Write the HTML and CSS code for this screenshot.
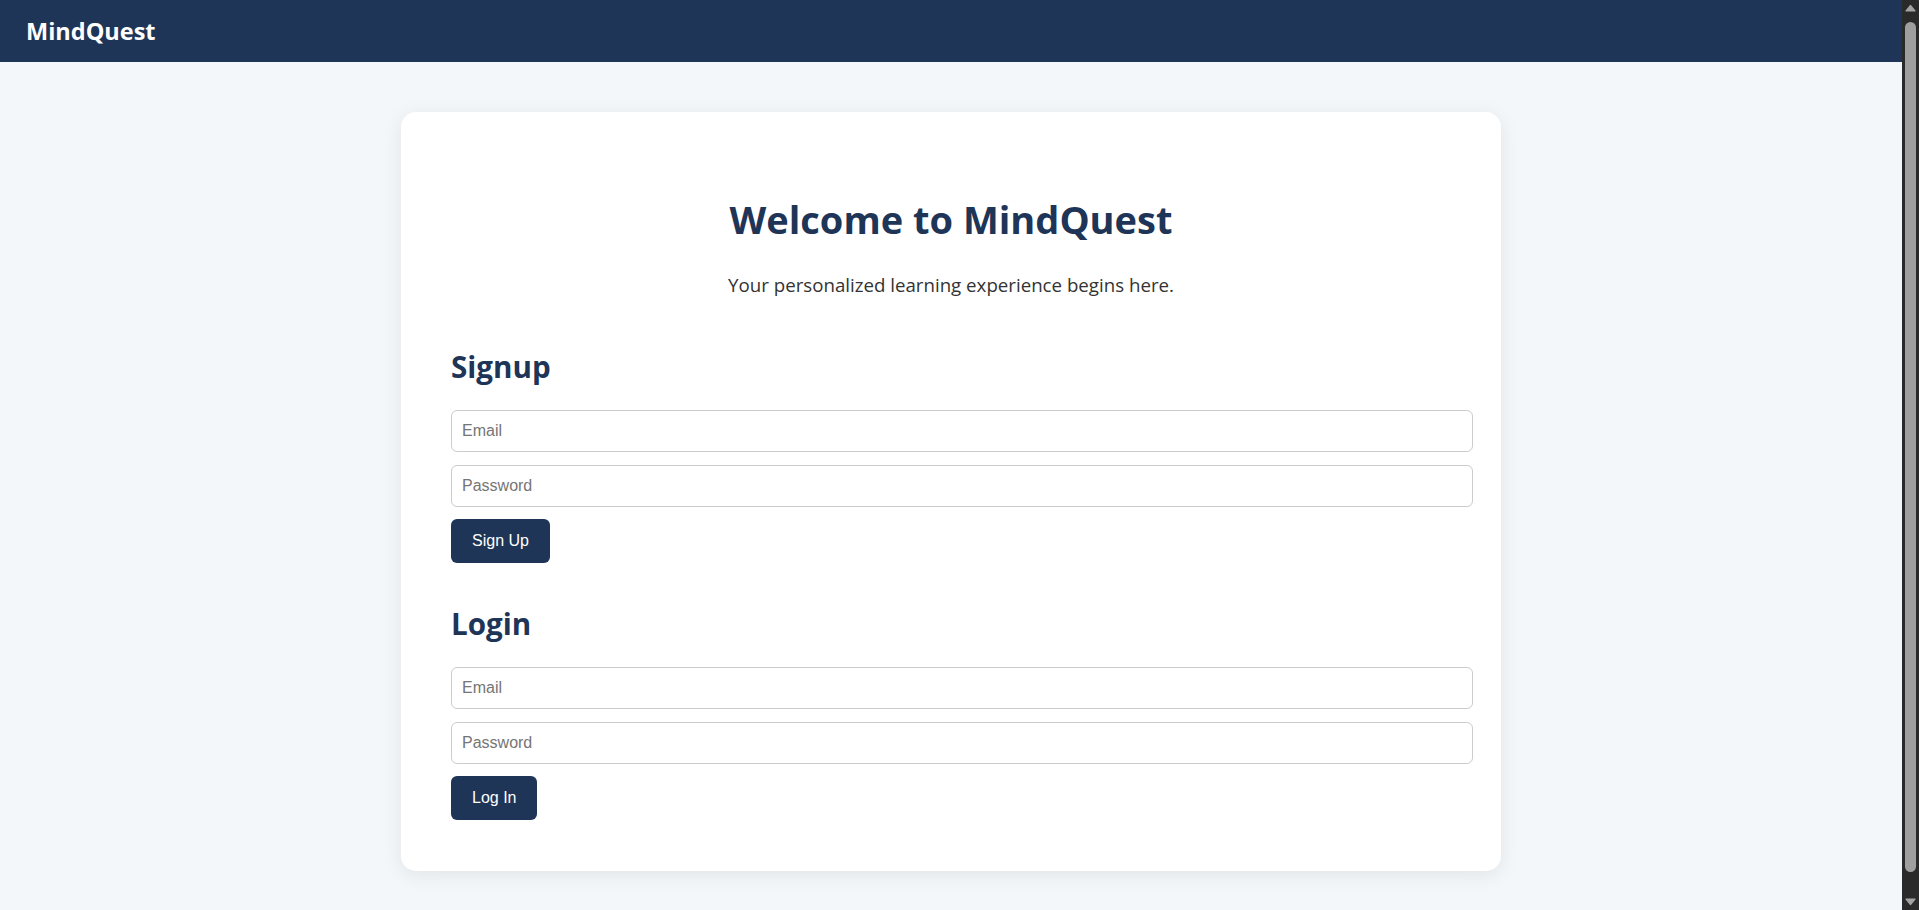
FILE: index.html
```html
<!DOCTYPE html>
<html lang="en">
<head>
<meta charset="utf-8">
<title>MindQuest</title>
<link rel="stylesheet" href="styles.css">
</head>
<body>
  <div class="app">
    <header class="topbar">
      <div class="logo">MindQuest</div>
    </header>
    <main class="page">
      <div class="card">
        <div class="hero">
          <h1 class="title">Welcome to MindQuest</h1>
          <p class="subtitle">Your personalized learning experience begins here.</p>
        </div>
        <section class="auth-block auth-signup">
          <h2 class="block-title">Signup</h2>
          <form class="field-stack">
            <input class="field" type="email" placeholder="Email">
            <input class="field" type="password" placeholder="Password">
            <button class="btn" type="button">Sign Up</button>
          </form>
        </section>
        <section class="auth-block auth-login">
          <h2 class="block-title">Login</h2>
          <form class="field-stack">
            <input class="field" type="email" placeholder="Email">
            <input class="field" type="password" placeholder="Password">
            <button class="btn" type="button">Log In</button>
          </form>
        </section>
      </div>
    </main>
  </div>
  <div class="scrollbar" aria-hidden="true">
    <svg class="sb-arrow" width="17" height="17" viewBox="0 0 17 17"><path d="M8.5 5.5 L13 11 L4 11 Z" fill="#a3a3a3" stroke="#a3a3a3" stroke-width="1.2" stroke-linejoin="round"/></svg>
    <div class="sb-track"><div class="sb-thumb"></div></div>
    <svg class="sb-arrow" width="17" height="17" viewBox="0 0 17 17"><path d="M8.5 11.5 L13 6 L4 6 Z" fill="#a3a3a3" stroke="#a3a3a3" stroke-width="1.2" stroke-linejoin="round"/></svg>
  </div>
</body>
</html>
```

FILE: styles.css
```css
html {
  background: #f4f7fa;
}

body {
  margin: 0;
  background: #f4f7fa;
  font-family: "Open Sans", "Noto Sans", sans-serif;
  color: #333;
  display: flex;
  align-items: flex-start;
}

.app {
  flex: 1;
  min-width: 0;
}

.scrollbar {
  position: sticky;
  top: 0;
  flex: 0 0 17px;
  width: 17px;
  height: 100vh;
  background: #2a2a2a;
  display: flex;
  flex-direction: column;
}

.sb-arrow {
  display: block;
  flex: 0 0 17px;
}

.sb-track {
  flex: 1;
  padding: 5px 3px 4px;
  display: flex;
}

.sb-thumb {
  flex: 1;
  background: #9f9f9f;
  border-radius: 6px;
  margin-bottom: 17px;
}

.topbar {
  height: 62px;
  background: #1e3557;
  display: flex;
  align-items: center;
  padding: 0 26px;
}

.logo {
  color: #fff;
  font-weight: 700;
  font-size: 23.5px;
}

.page {
  padding: 50px 0 62px;
}

.card {
  width: 1000px;
  margin: 0 auto;
  padding: 50px 50px 51px;
  background: #fff;
  border-radius: 15px;
  box-shadow: 0 4px 20px rgba(0, 0, 0, 0.08);
}

.hero {
  text-align: center;
}

.title {
  margin: 35px 0 32px;
  font-size: 38px;
  line-height: 44px;
  font-weight: 700;
  color: #1e3557;
}

.subtitle {
  margin: 0;
  font-size: 18.7px;
  line-height: 24px;
  color: #333;
}

.auth-signup {
  margin-top: 53px;
}

.auth-login {
  margin-top: 44px;
}

.block-title {
  margin: 0 0 26px;
  font-size: 29.6px;
  line-height: 34px;
  font-weight: 700;
  color: #1e3557;
}

.field-stack {
  display: flex;
  flex-direction: column;
  align-items: flex-start;
  gap: 12.5px;
}

.field {
  width: 100%;
  height: 20px;
  padding: 10px;
  border: 1px solid #ccc;
  border-radius: 6px;
  font-family: "Liberation Sans", Arial, sans-serif;
  font-size: 16px;
  color: #333;
  background: #fff;
  outline: none;
}

.field::placeholder {
  color: #757575;
}

.btn {
  height: 44px;
  padding: 0 21px;
  border: none;
  border-radius: 6px;
  background: #1e3557;
  color: #fff;
  font-family: "Liberation Sans", Arial, sans-serif;
  font-size: 16px;
  cursor: pointer;
}
```
